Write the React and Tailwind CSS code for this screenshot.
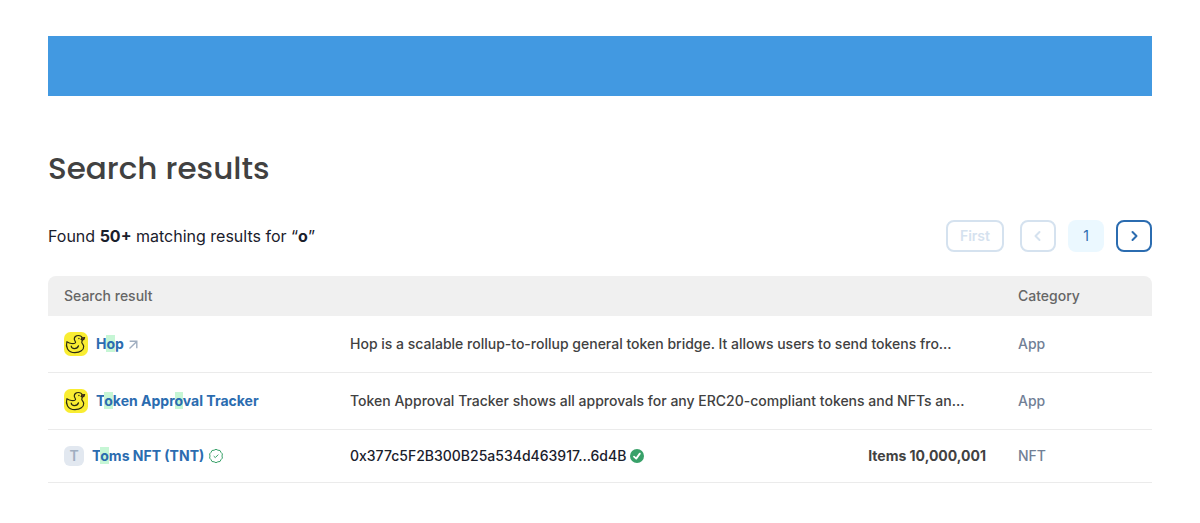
import React from "react";

function Mark({ children }) {
  return <mark className="bg-[#c6f6d5] text-inherit">{children}</mark>;
}

function DuckIcon() {
  return (
    <svg className="size-6 shrink-0" viewBox="0 0 24 24" fill="none" aria-hidden="true">
      <rect width="24" height="24" rx="6.500" fill="#f9ed32" />
      <g stroke="#2b2b12" strokeWidth="1.200" strokeLinecap="round" strokeLinejoin="round">
        <path d="M18.200 5.800C17.600 4.200 16.300 3.500 14.500 3.500c-2.500 0-4.200 1.500-4.200 3.500 0 1.600 1.600 2.500 1.200 3.600-.4 1-2.200 1.100-3.900.9-2-.2-3.300-.9-4.700-1.800C1.500 14.500 3.400 20.600 10.900 20.600c5.400 0 9-2.600 8.800-6.200-.1-2.100-1.800-2.700-1.900-3.900 0-.8.400-1.400.5-2.500" />
        <path d="M7.200 14c.3 3.400 6 3.600 7.300-.2" />
        <path d="M17.800 6.200l2.800-.7c-.1 1.400-.8 2.300-2.200 2.500l-1.300-.6Z" fill="#b5382a" />
      </g>
      <circle cx="14.900" cy="6.500" r=".7" fill="#2b2b12" />
    </svg>
  );
}

function ArrowOut() {
  return (
    <svg className="size-3 shrink-0" viewBox="0 0 12 12" fill="none" stroke="#a0aec0" strokeWidth="1.400" aria-hidden="true">
      <path d="M1.500 10.500L8.500 3.700M1.700 3.200h7.100v7" />
    </svg>
  );
}

function VerifiedBadge() {
  return (
    <svg className="size-4 shrink-0" viewBox="0 0 16 16" fill="none" stroke="#38a169" aria-hidden="true">
      <path
        d="M8 1.300l1.900.9 2.100.3 1 1.900 1.400 1.500-.4 2.100.4 2.100-1.400 1.500-1 1.900-2.100.3L8 14.700l-1.900-.9-2.100-.3-1-1.900-1.400-1.500.4-2.100-.4-2.100L3 4.400l1-1.900 2.100-.3L8 1.300Z"
        strokeWidth="1"
        strokeLinejoin="round"
      />
      <path d="M5.700 8.100l1.600 1.500 3-3" strokeWidth="1" />
    </svg>
  );
}

function CheckDisc() {
  return (
    <svg className="size-[14px] shrink-0" viewBox="0 0 14 14" fill="none" aria-hidden="true">
      <circle cx="7" cy="7" r="7" fill="#38a169" />
      <path d="M4 7.600l2.200 2 3.600-5" stroke="#fff" strokeWidth="1.800" strokeLinecap="round" strokeLinejoin="round" />
    </svg>
  );
}

function Chevron({ d }) {
  return (
    <svg className="size-3" viewBox="0 0 12 12" fill="none" stroke="currentColor" strokeWidth="2" strokeLinecap="round" strokeLinejoin="round" aria-hidden="true">
      <path d={d} />
    </svg>
  );
}

const link = "font-bold text-[#2b6cb0]";
const square = "flex h-8 w-9 items-center justify-center rounded-lg";

function Pagination() {
  return (
    <nav aria-label="Pagination" className="flex items-center text-sm">
      <button disabled className="mr-4 h-8 rounded-lg border-2 border-[#d5e2ef] px-3 font-semibold leading-5 text-[#d5e2ef]">
        First
      </button>
      <button disabled aria-label="Previous page" className={`${square} mr-3 border-2 border-[#d5e2ef] text-[#d5e2ef]`}>
        <Chevron d="M7.500 2L3.500 6l4 4" />
      </button>
      <button aria-current="page" className={`${square} mr-3 bg-[#ebf8ff] text-[#2b6cb0]`}>
        1
      </button>
      <button aria-label="Next page" className={`${square} border-2 border-[#2b6cb0] text-[#2b6cb0]`}>
        <Chevron d="M4.500 2l4 4-4 4" />
      </button>
    </nav>
  );
}

function Row({ name, children, category }) {
  return (
    <tr className="border-b border-[#ebebeb]">
      <td className="p-4">{name}</td>
      <td className="p-4">{children}</td>
      <td className="p-4 text-[#718096]">{category}</td>
    </tr>
  );
}

export default function App() {
  return (
    <main className="px-12 py-9 font-['Inter',sans-serif] text-[#1a202c]">
      <div className="h-[60px] bg-[#4299e1]" />
      <h1 className="mt-13 font-['Poppins','Inter',sans-serif] text-[31px] font-medium leading-10 text-[#414141]">
        Search results
      </h1>
      <div className="mt-8 flex items-center justify-between">
        <p className="text-base leading-6">
          Found <b>50+</b> matching results for “<b>o</b>”
        </p>
        <Pagination />
      </div>
      <table className="mt-6 w-full table-fixed text-left text-sm font-medium leading-5">
        <thead>
          <tr className="bg-[#f0f0f0] text-[#666666]">
            <th className="rounded-tl-lg px-4 py-[10px] font-medium">Search result</th>
            <td className="w-[668px] px-4 py-[10px]" />
            <th className="w-[150px] rounded-tr-lg px-4 py-[10px] font-medium">Category</th>
          </tr>
        </thead>
        <tbody>
          <Row
            category="App"
            name={
              <div className="flex items-center">
                <DuckIcon />
                <a href="#hop" className={`${link} ml-2 mr-1`}>
                  H<Mark>o</Mark>p
                </a>
                <ArrowOut />
              </div>
            }
          >
            <p className="text-[#414141]">
              Hop is a scalable rollup-to-rollup general token bridge. It allows users to send tokens fro...
            </p>
          </Row>
          <Row
            category="App"
            name={
              <div className="flex items-center">
                <DuckIcon />
                <a href="#tracker" className={`${link} ml-2`}>
                  T<Mark>o</Mark>ken Appr<Mark>o</Mark>val Tracker
                </a>
              </div>
            }
          >
            <p className="text-[#414141]">
              Token Approval Tracker shows all approvals for any ERC20-compliant tokens and NFTs an...
            </p>
          </Row>
          <Row
            category="NFT"
            name={
              <div className="flex items-center">
                <span className="flex size-5 shrink-0 items-center justify-center rounded-md bg-[#e2e8f0] font-semibold text-[#a0aec0]">T</span>
                <a href="#toms" className={`${link} ml-2 mr-1`}>
                  T<Mark>o</Mark>ms NFT (TNT)
                </a>
                <VerifiedBadge />
              </div>
            }
          >
            <div className="flex items-center gap-1">
              <span>0x377c5F2B300B25a534d463917...6d4B</span>
              <CheckDisc />
              <span className="ml-auto font-bold text-[#414141]">Items 10,000,001</span>
            </div>
          </Row>
        </tbody>
      </table>
    </main>
  );
}
